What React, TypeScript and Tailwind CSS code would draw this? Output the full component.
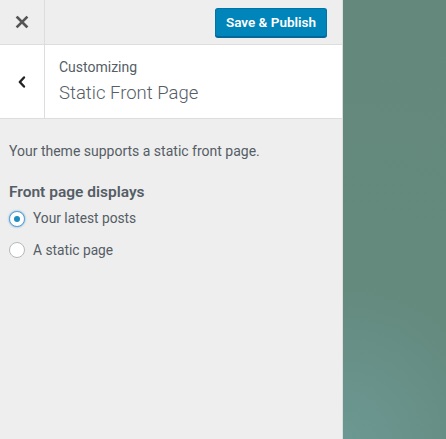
import { useState } from "react";

const font = { fontFamily: "Roboto, 'Liberation Sans', sans-serif" };

function Radio({ checked, label, onSelect }: { checked: boolean; label: string; onSelect: () => void }) {
  return (
    <label className="flex items-center gap-2 cursor-pointer" onClick={onSelect}>
      <span
        className={`flex h-4 w-4 items-center justify-center rounded-full border bg-white ${
          checked ? "border-[#5b9dd9] shadow-[0_0_2px_rgba(30,140,190,0.8)]" : "border-[#b4b9be]"
        }`}
      >
        {checked && <span className="h-[6px] w-[6px] rounded-full bg-[#1e8cbe]" />}
      </span>
      <span className="text-[13.75px] text-[#555d66]">{label}</span>
    </label>
  );
}

export default function App() {
  const [choice, setChoice] = useState("posts");

  return (
    <div className="flex h-[439px] w-[446px] overflow-hidden" style={font}>
      <aside className="flex w-[343px] shrink-0 flex-col border-r border-[#ddd] bg-[#eee]">
        <div className="flex h-[45px] items-center border-b border-[#ddd]">
          <button className="flex h-full w-[45px] items-center justify-center border-r border-[#ddd] text-[#555]">
            <svg width="14" height="14" viewBox="0 0 14 14" aria-hidden="true">
              <path d="M2.5 2.5 L11.5 11.5 M11.5 2.5 L2.5 11.5" stroke="#555" strokeWidth="2.6" strokeLinecap="square" />
            </svg>
          </button>
          <div className="flex-1" />
          <button className="mr-[15px] h-[29px] rounded-[3px] border border-[#0073aa] border-b-[#006799] bg-[#0085ba] px-[10px] text-[13.5px] font-semibold text-white shadow-[0_1px_0_#006799]">
            Save &amp; Publish
          </button>
        </div>

        <div className="flex h-[74px] border-b border-[#ddd] bg-white">
          <button className="flex w-[45px] items-center justify-center border-r border-[#ddd]">
            <svg width="10" height="14" viewBox="0 0 10 14" aria-hidden="true">
              <path d="M7 2.5 L2.8 7 L7 11.5" stroke="#222" strokeWidth="2.4" fill="none" strokeLinecap="round" strokeLinejoin="round" />
            </svg>
          </button>
          <div className="flex flex-col justify-center pl-[14px]">
            <span className="text-[14px] leading-4 text-[#555d66]">Customizing</span>
            <span className="mt-[6px] text-[18.5px] font-light leading-6 text-[#555d66]">Static Front Page</span>
          </div>
        </div>

        <div className="px-[9px] pt-[22px]">
          <p className="text-[14px] text-[#555d66]">Your theme supports a static front page.</p>
          <h3 className="mt-[19px] text-[15.5px] font-semibold text-[#555d66]">Front page displays</h3>
          <div className="mt-[4px] flex flex-col gap-[11px]">
            <Radio checked={choice === "posts"} label="Your latest posts" onSelect={() => setChoice("posts")} />
            <Radio checked={choice === "page"} label="A static page" onSelect={() => setChoice("page")} />
          </div>
        </div>
      </aside>

      <main className="flex-1 bg-[radial-gradient(circle_at_0%_100%,#6c9893_0%,#64897d_35%,#64887c_100%)]" />
    </div>
  );
}
